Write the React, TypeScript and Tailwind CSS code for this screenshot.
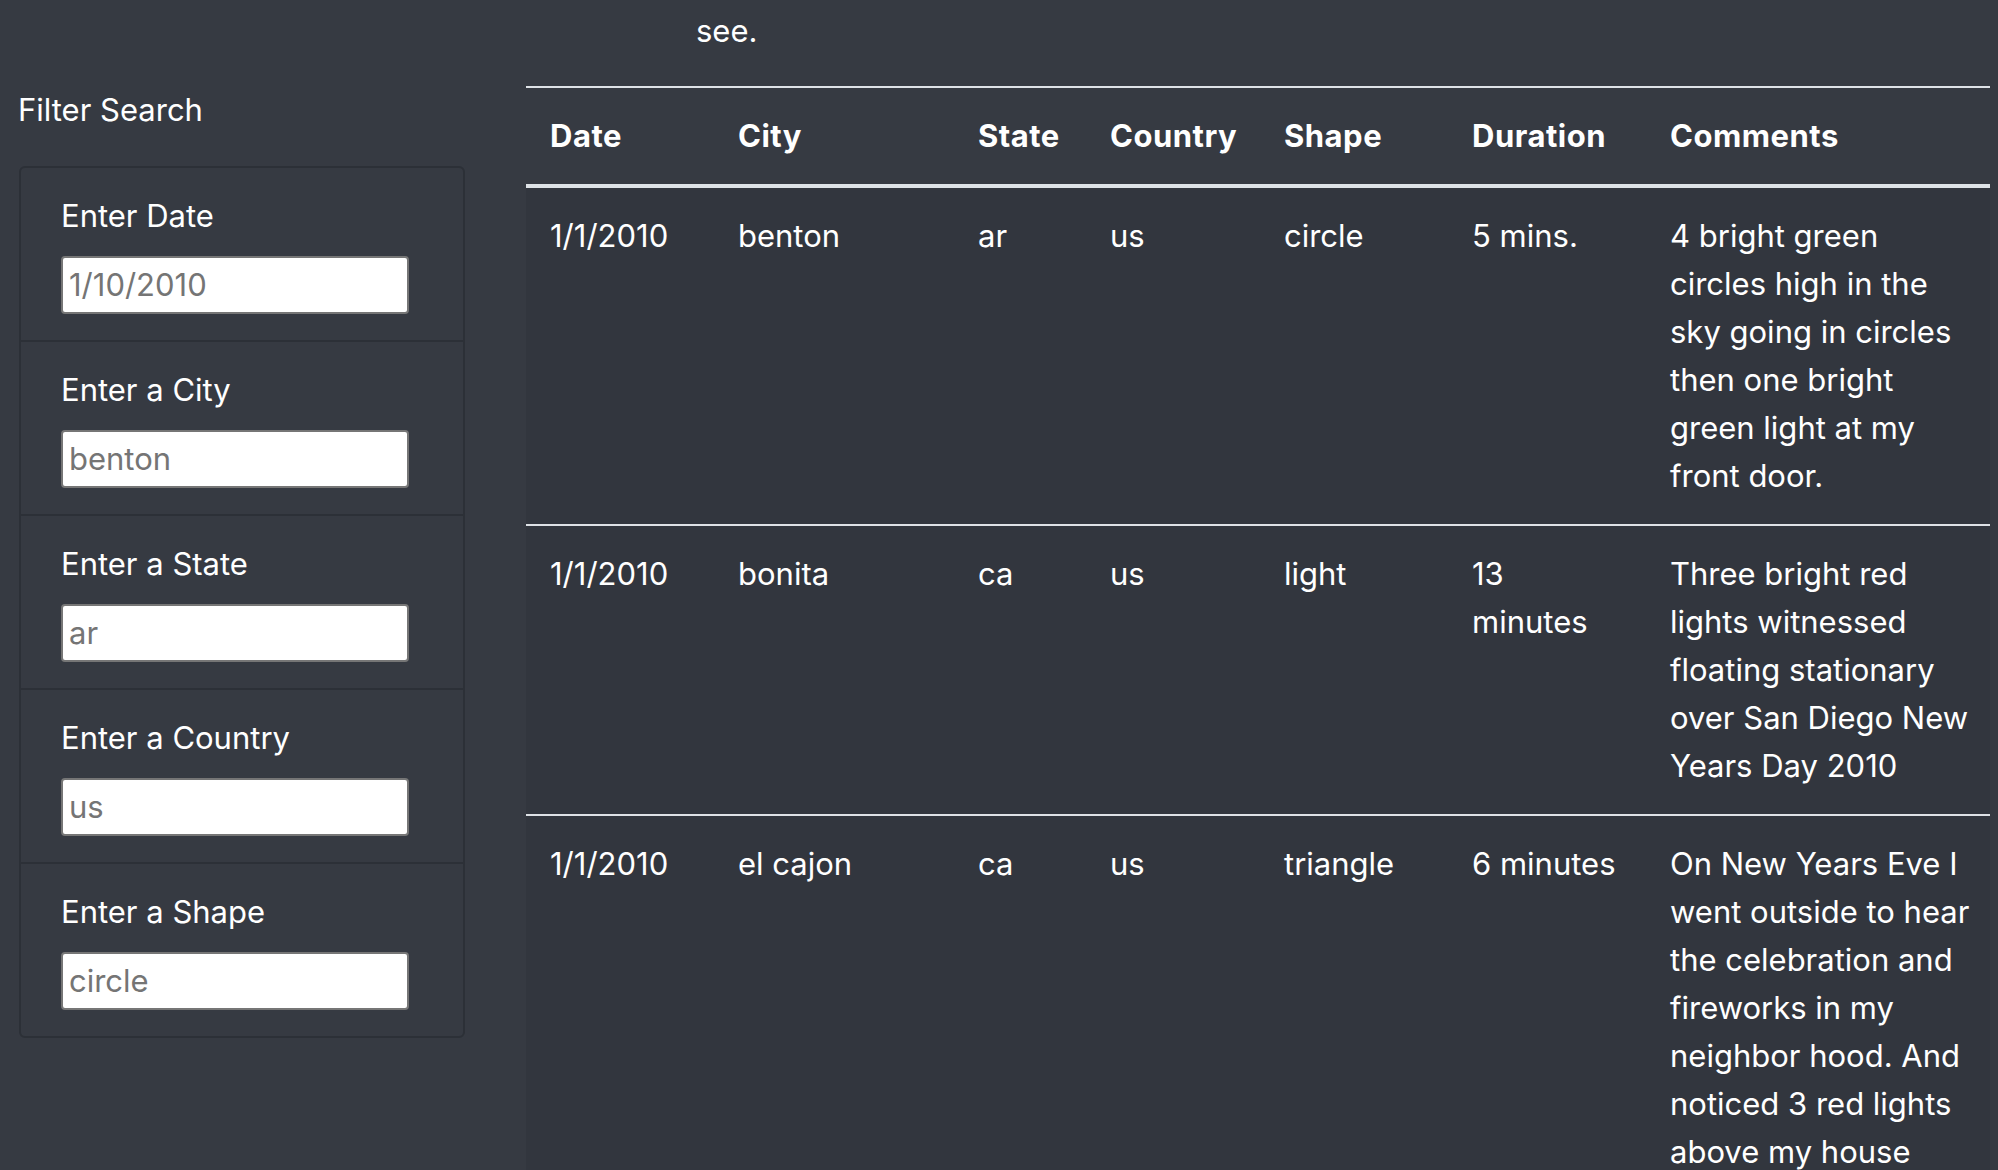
import React from "react";

const filters = [
  { label: "Enter Date", value: "1/10/2010" },
  { label: "Enter a City", value: "benton" },
  { label: "Enter a State", value: "ar" },
  { label: "Enter a Country", value: "us" },
  { label: "Enter a Shape", value: "circle" },
];

const rows = [
  {
    date: "1/1/2010",
    city: "benton",
    state: "ar",
    country: "us",
    shape: "circle",
    duration: ["5 mins."],
    comments: [
      "4 bright green",
      "circles high in the",
      "sky going in circles",
      "then one bright",
      "green light at my",
      "front door.",
    ],
  },
  {
    date: "1/1/2010",
    city: "bonita",
    state: "ca",
    country: "us",
    shape: "light",
    duration: ["13", "minutes"],
    comments: [
      "Three bright red",
      "lights witnessed",
      "floating stationary",
      "over San Diego New",
      "Years Day 2010",
    ],
  },
  {
    date: "1/1/2010",
    city: "el cajon",
    state: "ca",
    country: "us",
    shape: "triangle",
    duration: ["6 minutes"],
    comments: [
      "On New Years Eve I",
      "went outside to hear",
      "the celebration and",
      "fireworks in my",
      "neighbor hood. And",
      "noticed 3 red lights",
      "above my house",
    ],
  },
];

const headers = ["Date", "City", "State", "Country", "Shape", "Duration", "Comments"];
const widths = ["w-[188px]", "w-[240px]", "w-[132px]", "w-[174px]", "w-[188px]", "w-[198px]", "w-[344px]"];

export default function App() {
  return (
    <div
      className="h-[1170px] w-[1998px] bg-[#363a42] text-white overflow-hidden"
      style={{ fontFamily: "Inter, 'Noto Sans', sans-serif" }}
    >
      <div className="pt-[7px] pl-[696px] text-[31px] leading-[48px]">see.</div>
      <div className="flex mt-[31px]">
        <aside className="w-[526px] shrink-0 pl-[18px]">
          <h5 className="text-[31px] leading-[48px] font-normal">Filter Search</h5>
          <div className="mt-[32px] ml-[1px] w-[446px] rounded-[6px] border-2 border-[#2c3037] bg-[#363a42]">
            {filters.map((f, i) => (
              <div
                key={f.label}
                className={
                  "pl-[40px] pr-[40px] pt-[24px] pb-[26px] " +
                  (i > 0 ? "border-t-2 border-[#2c3037]" : "")
                }
              >
                <div className="text-[31px] leading-[48px]">{f.label}</div>
                <div className="mt-[16px] w-[348px] h-[58px] bg-white border-2 border-[#767676] rounded-[4px] flex items-center pl-[6px] text-[31px] text-[#757575]">
                  {f.value}
                </div>
              </div>
            ))}
          </div>
        </aside>
        <main className="w-[1464px] shrink-0">
          <table className="w-[1464px] border-collapse text-[31px] leading-[48px] table-fixed">
            <thead>
              <tr className="border-t-2 border-b-4 border-[#dee2e6]">
                {headers.map((h, i) => (
                  <th
                    key={h}
                    className={"text-left font-bold tracking-[0.5px] px-[24px] py-[24px] align-top " + widths[i]}
                  >
                    {h}
                  </th>
                ))}
              </tr>
            </thead>
            <tbody className="bg-[#32363e]">
              {rows.map((r, idx) => (
                <tr key={idx} className={idx > 0 ? "border-t-2 border-[#dee2e6]" : ""}>
                  <td className="px-[24px] py-[24px] align-top">{r.date}</td>
                  <td className="px-[24px] py-[24px] align-top">{r.city}</td>
                  <td className="px-[24px] py-[24px] align-top">{r.state}</td>
                  <td className="px-[24px] py-[24px] align-top">{r.country}</td>
                  <td className="px-[24px] py-[24px] align-top">{r.shape}</td>
                  <td className="px-[24px] py-[24px] align-top">
                    {r.duration.map((d) => (
                      <div key={d} className="whitespace-nowrap">{d}</div>
                    ))}
                  </td>
                  <td className="px-[24px] py-[24px] align-top">
                    {r.comments.map((c) => (
                      <div key={c} className="whitespace-nowrap">{c}</div>
                    ))}
                  </td>
                </tr>
              ))}
            </tbody>
          </table>
        </main>
      </div>
    </div>
  );
}
